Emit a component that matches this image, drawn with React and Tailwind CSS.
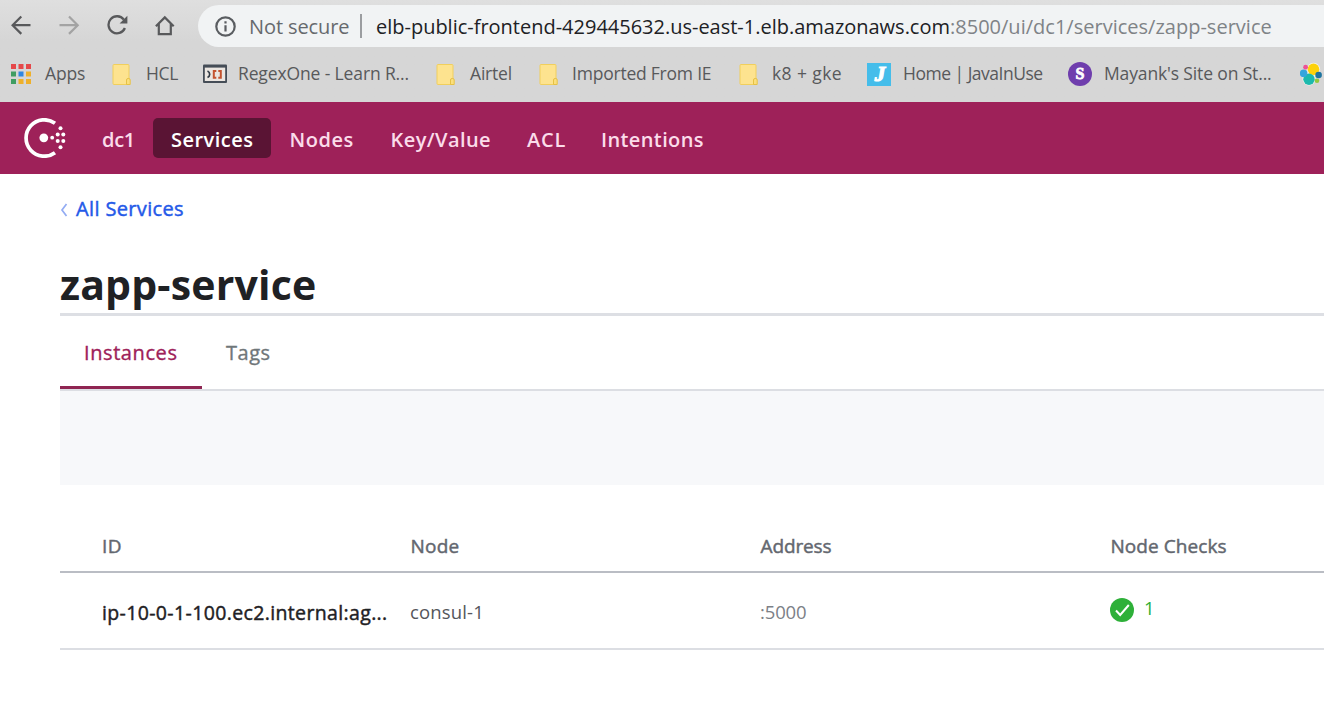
import React from "react";

const Folder = () => (
  <svg width="19" height="23" viewBox="0 0 19 23" className="shrink-0">
    <rect x="1" y="1.500" width="16" height="20" rx="1" fill="#fde38f" stroke="#f1cf5c" />
    <path d="M14.500 21.500v-4.500q0-1.500 1.500-1.500h.8q1.400 0 1.400 1.500v4.500z" fill="#fbdf7c" stroke="#e6c146" strokeWidth="1" />
  </svg>
);

const AppsGrid = () => {
  const colors = ["#e5484a", "#e5484a", "#e5484a", "#3f9d62", "#2f86e0", "#eeb02b", "#3f9d62", "#eeb02b", "#eeb02b"];
  return (
    <svg width="20" height="20" viewBox="0 0 20 20" className="shrink-0">
      {colors.map((c, i) => (
        <rect key={i} x={(i % 3) * 7.5} y={Math.floor(i / 3) * 7.5} width="5" height="5" fill={c} />
      ))}
    </svg>
  );
};

const RegexIcon = () => (
  <svg width="24" height="20" viewBox="0 0 24 20" className="shrink-0">
    <rect x="0" y="0.500" width="24" height="18.500" rx="1" fill="#454d57" />
    <rect x="1.800" y="3.600" width="20.400" height="13.400" fill="#ebe6e1" />
    <path d="M4.500 7q2.200 1 2.200 3.300q0 2.200-2.200 3.200" stroke="#333b45" strokeWidth="1.700" fill="none" />
    <path d="M13.300 7h-2.500v6.700h2.500M15.300 7h2.500v6.700h-2.500" stroke="#c4532f" strokeWidth="2" fill="none" />
  </svg>
);

const Elastic = () => (
  <svg width="22" height="24" viewBox="0 0 22 24" className="shrink-0">
    <circle cx="13.500" cy="7.300" r="6.600" fill="#f3f3ee" />
    <circle cx="9" cy="17" r="6.500" fill="#f3f3ee" />
    <circle cx="13.500" cy="7.300" r="5.800" fill="#fdd20a" />
    <circle cx="9" cy="17.300" r="5.700" fill="#1cb9ad" />
    <circle cx="3.600" cy="11.300" r="3.700" fill="#35a5dd" />
    <circle cx="5.600" cy="5.200" r="2.400" fill="#ee5296" />
    <circle cx="18.600" cy="13" r="3.300" fill="#1d74a0" />
    <circle cx="17" cy="18.800" r="2.300" fill="#93c83e" />
  </svg>
);

const ConsulLogo = () => (
  <svg width="42" height="40" viewBox="0 0 42 40" className="shrink-0">
    <path d="M31 5.300A18.200 18.200 0 1 0 31 34.700" fill="none" stroke="#fff" strokeWidth="3.700" />
    <g fill="#fff">
      <circle cx="19.800" cy="19.800" r="4.400" />
      <circle cx="28.200" cy="19.700" r="1.900" />
      <circle cx="33.700" cy="16.600" r="2" />
      <circle cx="33.700" cy="22.900" r="2" />
      <circle cx="39.300" cy="16.600" r="2" />
      <circle cx="39.300" cy="22.900" r="2" />
      <circle cx="36.500" cy="10.300" r="2" />
      <circle cx="36.500" cy="29.200" r="2" />
    </g>
  </svg>
);

const Toolbar = () => (
  <div className="flex h-[51px] items-center">
    <div className="ml-[11px] flex w-[187px] shrink-0 items-center gap-[27px]">
      <svg width="21" height="21" viewBox="0 0 21 21" fill="none" stroke="#58595b" strokeWidth="2.200">
        <path d="M19.500 10.200H2M10.300 1.500L1.600 10.200l8.700 8.700" />
      </svg>
      <svg width="21" height="21" viewBox="0 0 21 21" fill="none" stroke="#a3a3a3" strokeWidth="2.200">
        <path d="M0.500 10.200H18.500M10 1.500l8.700 8.700-8.700 8.700" />
      </svg>
      <svg width="21" height="21" viewBox="0 0 21 21" fill="none">
        <path d="M16.800 4.600A8.500 8.500 0 1 0 17.900 13" stroke="#58595b" strokeWidth="2.300" />
        <path d="M20.400 0.700V8.400H12.600Z" fill="#58595b" />
      </svg>
      <svg width="21" height="21" viewBox="0 0 21 21" fill="none" stroke="#58595b" strokeWidth="2.200">
        <path d="M0.900 11.300L9.800 2.400l8.900 8.900M3.800 9v10.200h12V9" />
      </svg>
    </div>
    <div className="mt-px flex h-[42px] flex-1 items-center rounded-l-full bg-[#f1f3f4] pl-[17px] text-[20px] whitespace-nowrap">
      <svg width="21" height="21" viewBox="0 0 21 21" className="shrink-0">
        <circle cx="10.500" cy="10.500" r="9.200" fill="none" stroke="#5a5d61" strokeWidth="2.200" />
        <path d="M10.500 9.300v6.200M10.500 5.300v2.200" stroke="#5a5d61" strokeWidth="2.200" />
      </svg>
      <span className="ml-[12px] w-[112px] shrink-0 pt-[2px] pl-px tracking-[-0.1px] text-[#66696d]">Not secure</span>
      <span className="h-[24px] w-[2px] shrink-0 bg-[#9b9da0]" />
      <span className="ml-[14px] pt-[2px] tracking-[-0.01px] text-[#202124]">
        elb-public-frontend-429445632.us-east-1.elb.amazonaws.com<span className="tracking-[0.01px] text-[#7f8387]">:8500/ui/dc1/services/zapp-service</span>
      </span>
    </div>
  </div>
);

const Bookmarks = () => (
  <div className="flex h-[46px] items-center whitespace-nowrap text-[17.500px] text-[#58595b]">
    <div className="ml-[11px] flex w-[101px] shrink-0 items-center gap-[14px]">
      <AppsGrid />
      <span className="-mt-[2px] tracking-[-0.15px]">Apps</span>
    </div>
    <div className="flex w-[91px] shrink-0 items-center gap-[15px]">
      <Folder />
      <span className="-mt-[2px] tracking-[-0.3px]">HCL</span>
    </div>
    <div className="flex w-[233px] shrink-0 items-center gap-[11px]">
      <RegexIcon />
      <span className="-mt-[2px] tracking-[-0.13px]">RegexOne - Learn R...</span>
    </div>
    <div className="flex w-[103px] shrink-0 items-center gap-[15px]">
      <Folder />
      <span className="-mt-[2px] tracking-[-0.19px]">Airtel</span>
    </div>
    <div className="flex w-[200px] shrink-0 items-center gap-[14px]">
      <Folder />
      <span className="-mt-[2px] tracking-[-0.22px]">Imported From IE</span>
    </div>
    <div className="flex w-[128px] shrink-0 items-center gap-[14px]">
      <Folder />
      <span className="-mt-[2px] tracking-[0.4px]">k8 + gke</span>
    </div>
    <div className="flex w-[201px] shrink-0 items-center gap-[12px]">
      <span className="flex h-[23px] w-[24px] items-start justify-center bg-[#45bdea]">
        <span className="pt-[1px] pl-[2px] font-['Liberation_Serif',serif] text-[21px] leading-[20px] font-bold text-white italic [-webkit-text-stroke:1.200px_white]">J</span>
      </span>
      <span className="-mt-[2px] tracking-[-0.5px]">Home | JavaInUse</span>
    </div>
    <div className="flex w-[232px] shrink-0 items-center gap-[12px]">
      <span className="flex size-[24px] items-center justify-center rounded-full bg-[#6f3ead] font-['Liberation_Serif',serif] text-[16px] leading-none font-bold text-white [-webkit-text-stroke:0.800px_white]">S</span>
      <span className="-mt-[2px] tracking-[-0.14px]">Mayank's Site on St...</span>
    </div>
    <Elastic />
  </div>
);

const NavBar = () => (
  <nav className="flex h-[72px] items-center bg-[#9e2159] text-[20px] font-semibold whitespace-nowrap text-[#fbdcea]">
    <div className="ml-[24px] w-[78px] shrink-0">
      <ConsulLogo />
    </div>
    <span className="w-[51px] pt-[3px] tracking-[-0.27px]">dc1</span>
    <span className="flex h-[40px] w-[118px] items-center rounded-[5px] bg-[#5a1434] pt-[3px] pl-[18px] tracking-[0.49px] text-white">Services</span>
    <span className="ml-[18.500px] w-[101px] pt-[3px] tracking-[0.52px]">Nodes</span>
    <span className="w-[136.500px] pt-[3px] tracking-[0.43px]">Key/Value</span>
    <span className="w-[74px] pt-[3px] tracking-[0.74px]">ACL</span>
    <span className="pt-[3px] tracking-[0.38px]">Intentions</span>
  </nav>
);

const Check = () => (
  <svg width="24" height="24" viewBox="0 0 24 24" className="shrink-0">
    <circle cx="12" cy="12" r="12" fill="#2eb039" />
    <path d="M6 12.500l4.200 4.500L18.800 7" fill="none" stroke="#fff" strokeWidth="2" />
  </svg>
);

export default function App() {
  return (
    <div className="h-[724px] w-[1324px] overflow-hidden bg-white font-['Open_Sans','Noto_Sans',sans-serif]">
      <header className="h-[102px] bg-linear-to-b from-[#dfdfdf] to-[#d6d6d6] to-40%">
        <Toolbar />
        <Bookmarks />
      </header>
      <NavBar />
      <main className="pl-[60px] whitespace-nowrap">
        <div className="flex h-[70px] items-center text-[20px] font-medium text-[#2459e8]">
          <svg width="8" height="14" viewBox="0 0 8 14" className="mt-[2px]">
            <path d="M6.500 1L2 7l4.500 6" fill="none" stroke="#93acf3" strokeWidth="1.700" />
          </svg>
          <span className="ml-[8px] tracking-[0.36px] [-webkit-text-stroke:0.450px]">All Services</span>
        </div>
        <h1 className="h-[72px] border-b-[3px] border-[#dddfe4] pt-[9px] text-[41px] leading-[62px] font-bold tracking-[0.180px] text-[#1f2124]">zapp-service</h1>
        <div className="flex h-[75px] border-b-2 border-[#dcdee3] text-[20px] leading-[74px] font-medium">
          <span className="h-[73px] w-[142px] border-b-[3px] border-[#8f2552] pl-[24px] tracking-[0.59px] text-[#9e2159] [-webkit-text-stroke:0.350px]">Instances</span>
          <span className="pl-[24px] tracking-[0.5px] text-[#6f7679] [-webkit-text-stroke:0.350px]">Tags</span>
        </div>
        <div className="h-[94px] bg-[#f7f8fa]" />
        <div className="mt-[33px] grid h-[55px] grid-cols-[308px_350px_350px_1fr] border-b-2 border-[#babdc4] pl-[42px] text-[19px] leading-[56px] font-medium text-[#63676f] [-webkit-text-stroke:0.450px]">
          <span className="tracking-[0.45px]">ID</span>
          <span className="pl-[0.500px] tracking-[0.24px]">Node</span>
          <span className="pl-[0.500px] tracking-[-0.12px]">Address</span>
          <span className="pl-[0.500px] tracking-[0.06px]">Node Checks</span>
        </div>
        <div className="grid h-[77px] grid-cols-[308px_350px_350px_1fr] border-b-2 border-[#dcdee3] pl-[42px] text-[18.500px] leading-[78px] text-[#54565b]">
          <span className="text-[19.500px] leading-[79px] font-medium tracking-[0.36px] text-[#1f2124] [-webkit-text-stroke:0.450px]">ip-10-0-1-100.ec2.internal:ag...</span>
          <span className="tracking-[0.15px]">consul-1</span>
          <span className="tracking-[-0.15px] text-[#7c8087]">:5000</span>
          <span className="flex h-[74px] items-center gap-[10px] text-[#2eb039]">
            <Check />
            <span className="-mt-[5px]">1</span>
          </span>
        </div>
      </main>
    </div>
  );
}
